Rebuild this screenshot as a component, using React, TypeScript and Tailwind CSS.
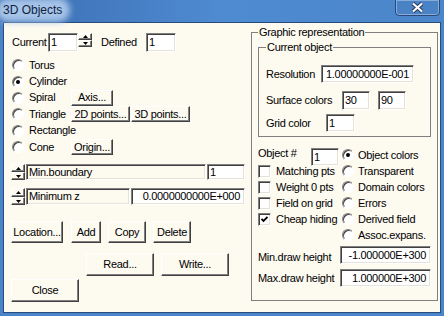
import type { ReactNode } from 'react';

const raised =
  'border border-t-white border-l-white border-r-[#404040] border-b-[#404040] shadow-[inset_-1px_-1px_#808080] bg-[#fdfaf0]';
const sunken =
  'border border-t-[#808080] border-l-[#808080] border-r-white border-b-white shadow-[inset_1px_1px_#404040,inset_-1px_-1px_#e6e2d6]';

function Button({ className = '', children }: { className?: string; children: ReactNode }) {
  return <div className={`${raised} flex items-center justify-center shrink-0 ${className}`}>{children}</div>;
}

function Field({
  className = '',
  value,
  right = false,
  white = true,
}: {
  className?: string;
  value: string;
  right?: boolean;
  white?: boolean;
}) {
  return (
    <div
      className={`${sunken} ${white ? 'bg-white' : 'bg-[#fdfaf0]'} flex items-center shrink-0 whitespace-nowrap overflow-hidden ${
        right ? 'justify-end pr-[4px]' : 'pl-[2px]'
      } ${className}`}
    >
      {value}
    </div>
  );
}

function Arrow({ down = false }: { down?: boolean }) {
  return (
    <svg width="5" height="3" viewBox="0 0 5 3">
      {down ? <path d="M0 0h5L2.5 3z" fill="#000" /> : <path d="M0 3h5L2.5 0z" fill="#000" />}
    </svg>
  );
}

function Spin({ className = '' }: { className?: string }) {
  return (
    <div className={`flex flex-col shrink-0 ${className}`}>
      <div className={`${raised} flex-1 flex items-center justify-center`}>
        <Arrow />
      </div>
      <div className={`${raised} flex-1 flex items-center justify-center`}>
        <Arrow down />
      </div>
    </div>
  );
}

function Radio({ checked = false, className = '' }: { checked?: boolean; className?: string }) {
  return (
    <div
      className={`w-[12px] h-[12px] rounded-full bg-white border border-t-[#808080] border-l-[#808080] border-r-white border-b-white shadow-[inset_1px_1px_#404040] flex items-center justify-center shrink-0 ${className}`}
    >
      {checked && <div className="w-[4px] h-[4px] rounded-full bg-black" />}
    </div>
  );
}

function Check({ checked = false }: { checked?: boolean }) {
  return (
    <div className={`${sunken} w-[13px] h-[13px] bg-white flex items-center justify-center shrink-0`}>
      {checked && (
        <svg width="7" height="7" viewBox="0 0 7 7">
          <path d="M0.5 3 L2.5 5 L6.5 1" stroke="#000" strokeWidth="1.8" fill="none" />
        </svg>
      )}
    </div>
  );
}

const shapes: Array<{ name: string; checked?: boolean; buttons: Array<{ label: string; w: string }> }> = [
  { name: 'Torus', buttons: [] },
  { name: 'Cylinder', checked: true, buttons: [] },
  { name: 'Spiral', buttons: [{ label: 'Axis...', w: 'w-[42px]' }] },
  {
    name: 'Triangle',
    buttons: [
      { label: '2D points...', w: 'w-[59px]' },
      { label: '3D points...', w: 'w-[59px] ml-[1px]' },
    ],
  },
  { name: 'Rectangle', buttons: [] },
  { name: 'Cone', buttons: [{ label: 'Origin...', w: 'w-[42px]' }] },
];

const options: Array<{ check?: string; checked?: boolean; radio: string; on?: boolean }> = [
  { radio: 'Object colors', on: true },
  { check: 'Matching pts', radio: 'Transparent' },
  { check: 'Weight 0 pts', radio: 'Domain colors' },
  { check: 'Field on grid', radio: 'Errors' },
  { check: 'Cheap hiding', checked: true, radio: 'Derived field' },
  { radio: 'Assoc.expans.' },
];

export default function App() {
  return (
    <div className="w-[444px] h-[316px] bg-[#4a84c9] flex flex-col font-['Liberation_Sans',Arial,sans-serif] text-[11px] leading-[13px] tracking-[-0.3px] text-black overflow-hidden">
      {/* Title bar */}
      <div className="relative h-[22px] shrink-0 bg-linear-to-r from-[#3b6db2] via-[#4f8bd1] to-[#4b86ca]">
        <div className="absolute left-[-4px] top-[-2px] w-[74px] h-[24px] rounded-[12px] bg-[#a6c4e8] blur-[3px]" />
        <span className="relative block pl-[3px] pt-[4px] text-[12px] tracking-normal text-[#10223f]">3D Objects</span>
        <div className="absolute right-[4px] top-[-1px] w-[45px] h-[17px] rounded-b-[4px] border border-[#2a4b7a] shadow-[inset_0_0_0_1px_#86abd9] bg-[#4a82c6] flex items-center justify-center">
          <svg width="13" height="11" viewBox="0 0 13 11">
            <path d="M2 1.5 L11 9.5 M11 1.5 L2 9.5" stroke="#23385a" strokeWidth="4" />
            <path d="M2 1.5 L11 9.5 M11 1.5 L2 9.5" stroke="#fff" strokeWidth="2.2" />
          </svg>
        </div>
      </div>

      {/* Client area */}
      <div className="mx-[3px] mb-[3px] flex-1 border border-[#274b7c] bg-[#fdfaf0] flex">
        {/* Left column */}
        <div className="w-[247px] pl-[7px] flex flex-col shrink-0">
          <div className="mt-[10px] h-[19px] flex items-center">
            <span className="ml-[1px] w-[36px]">Current</span>
            <Field className="w-[30px] h-[19px]" value="1" />
            <Spin className="self-start w-[14px] h-[14px]" />
            <span className="ml-[9px] w-[45px]">Defined</span>
            <Field className="w-[30px] h-[19px]" value="1" />
          </div>

          <div className="mt-[5px] flex flex-col">
            {shapes.map((s) => (
              <div key={s.name} className="h-[16.4px] flex items-center">
                <Radio className="ml-[1px]" checked={s.checked} />
                <span className="ml-[5px] w-[42px] shrink-0">{s.name}</span>
                {s.buttons.map((b) => (
                  <Button key={b.label} className={`${b.w} h-[16px]`}>
                    {b.label}
                  </Button>
                ))}
              </div>
            ))}
          </div>

          <div className="mt-[9px] h-[16px] flex">
            <Spin className="w-[14px] h-[16px]" />
            <Field className="ml-[1px] w-[180px] h-[16px]" value="Min.boundary" white={false} />
            <Field className="ml-[1px] w-[38px] h-[16px]" value="1" />
          </div>
          <div className="mt-[8px] h-[17px] flex">
            <Spin className="w-[14px] h-[17px]" />
            <Field className="ml-[1px] w-[104px] h-[17px]" value="Minimum z" white={false} />
            <Field className="ml-[1px] w-[114px] h-[17px]" value="0.0000000000E+000" right />
          </div>

          <div className="mt-[16px] h-[22px] flex">
            <Button className="w-[52px]">Location...</Button>
            <Button className="ml-[8px] w-[30px]">Add</Button>
            <Button className="ml-[7px] w-[38px]">Copy</Button>
            <Button className="ml-[7px] w-[38px]">Delete</Button>
          </div>
          <div className="mt-[10px] h-[23px] flex">
            <Button className="ml-[75px] w-[68px]">Read...</Button>
            <Button className="ml-[7px] w-[68px]">Write...</Button>
          </div>
          <div className="mt-[3px] h-[23px] flex">
            <Button className="w-[68px]">Close</Button>
          </div>
        </div>

        {/* Graphic representation */}
        <fieldset className="mt-[3px] w-[187px] h-[275px] border border-[#808080] pl-[6px] shrink-0">
          <legend className="px-[1px] leading-[12px]">Graphic representation</legend>
          <fieldset className="mt-[3px] w-[173px] h-[96px] border border-[#808080] pl-[7px]">
            <legend className="px-[1px] leading-[12px]">Current object</legend>
            <div className="mt-[12px] h-[18px] flex items-center">
              <span className="w-[55px] shrink-0">Resolution</span>
              <Field className="w-[93px] h-[18px]" value="1.00000000E-001" right />
            </div>
            <div className="mt-[8px] h-[19px] flex items-center">
              <span className="w-[76px] shrink-0">Surface colors</span>
              <Field className="w-[28px] h-[19px]" value="30" />
              <Field className="ml-[8px] w-[28px] h-[19px]" value="90" />
            </div>
            <div className="mt-[4px] h-[18px] flex items-center">
              <span className="w-[60px] shrink-0">Grid color</span>
              <Field className="w-[29px] h-[18px]" value="1" />
            </div>
          </fieldset>

          <div className="mt-[10px] flex flex-col">
            {options.map((o, i) => (
              <div key={o.radio} className="h-[16px] flex items-center">
                <div className="w-[82px] h-full flex items-center shrink-0">
                  {i === 0 ? (
                    <div className="flex items-start h-full">
                      <span className="w-[53px] shrink-0">Object #</span>
                      <Field className="mt-[1px] w-[28px] h-[18px]" value="1" />
                    </div>
                  ) : o.check ? (
                    <>
                      <Check checked={o.checked} />
                      <span className="ml-[5px] whitespace-nowrap">{o.check}</span>
                    </>
                  ) : null}
                </div>
                <Radio className="ml-[2px]" checked={o.on} />
                <span className="ml-[4px] whitespace-nowrap">{o.radio}</span>
              </div>
            ))}
          </div>

          <div className="mt-[3px] h-[18px] flex">
            <span className="w-[82px] shrink-0 self-end whitespace-nowrap">Min.draw height</span>
            <Field className="w-[91px] h-[18px]" value="-1.000000E+300" right />
          </div>
          <div className="mt-[5px] h-[18px] flex items-center">
            <span className="w-[82px] shrink-0 whitespace-nowrap">Max.draw height</span>
            <Field className="w-[91px] h-[18px]" value="1.000000E+300" right />
          </div>
        </fieldset>
      </div>
    </div>
  );
}
